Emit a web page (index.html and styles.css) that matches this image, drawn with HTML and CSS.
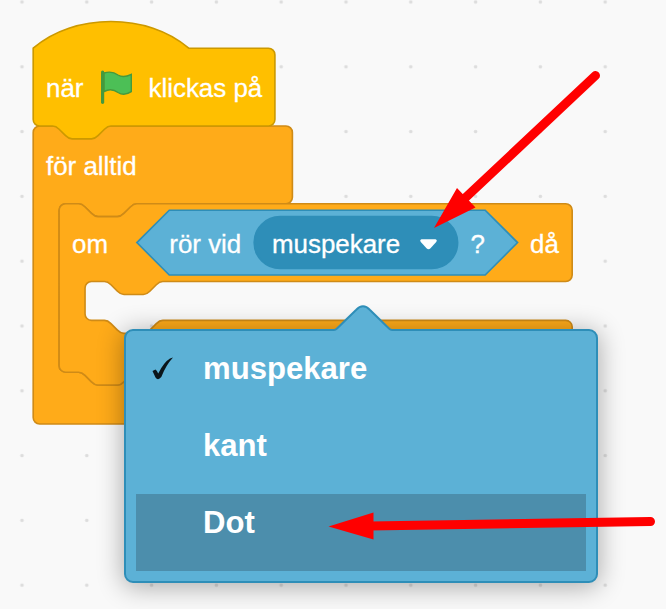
FILE: index.html
```html
<!DOCTYPE html>
<html lang="sv">
<head>
<meta charset="utf-8">
<title>Block</title>
<link rel="stylesheet" href="styles.css">
</head>
<body>
<main class="workspace">
  <svg class="blocks" width="666" height="609" viewBox="0 0 666 609">
    <defs>
      <pattern id="grid" x="-10.4" y="-30.4" width="64.8" height="64.8" patternUnits="userSpaceOnUse">
        <circle cx="32.4" cy="32.4" r="1.8" class="dot"/>
      </pattern>
    </defs>
    <rect width="666" height="609" fill="url(#grid)"/>
    <g transform="translate(33.2 48.2) scale(1.62)">
      <path class="control" d="M0,52 a4,4 0 0,1 4,-4 H156 a4,4 0 0,1 4,4 V92 a4,4 0 0,1 -4,4 H64 c-2,0 -3,1 -4,2 l-4,4 c-1,1 -2,2 -4,2 h-12 c-2,0 -3,-1 -4,-2 l-4,-4 c-1,-1 -2,-2 -4,-2 h-8 a4,4 0 0,0 -4,4 V196 a4,4 0 0,0 4,4 h8 c2,0 3,1 4,2 l4,4 c1,1 2,2 4,2 h12 c2,0 3,-1 4,-2 l4,-4 c1,-1 2,-2 4,-2 H156 a4,4 0 0,1 4,4 V228 a4,4 0 0,1 -4,4 H4 a4,4 0 0,1 -4,-4 Z"/>
      <path class="event" d="M0,0 c25,-22 71,-22 96,0 H145.200 a4,4 0 0,1 4,4 V44 a4,4 0 0,1 -4,4 H48 c-2,0 -3,1 -4,2 l-4,4 c-1,1 -2,2 -4,2 h-12 c-2,0 -3,-1 -4,-2 l-4,-4 c-1,-1 -2,-2 -4,-2 H4 a4,4 0 0,1 -4,-4 Z"/>
      <path class="control" d="M16,100 a4,4 0 0,1 4,-4 h8 c2,0 3,1 4,2 l4,4 c1,1 2,2 4,2 h12 c2,0 3,-1 4,-2 l4,-4 c1,-1 2,-2 4,-2 H328.700 a4,4 0 0,1 4,4 V140 a4,4 0 0,1 -4,4 H80 c-2,0 -3,1 -4,2 l-4,4 c-1,1 -2,2 -4,2 h-12 c-2,0 -3,-1 -4,-2 l-4,-4 c-1,-1 -2,-2 -4,-2 h-8 a4,4 0 0,0 -4,4 V164 a4,4 0 0,0 4,4 h8 c2,0 3,1 4,2 l4,4 c1,1 2,2 4,2 h12 c2,0 3,-1 4,-2 l4,-4 c1,-1 2,-2 4,-2 H328.700 a4,4 0 0,1 4,4 V196 a4,4 0 0,1 -4,4 H64 c-2,0 -3,1 -4,2 l-4,4 c-1,1 -2,2 -4,2 h-12 c-2,0 -3,-1 -4,-2 l-4,-4 c-1,-1 -2,-2 -4,-2 h-8 a4,4 0 0,1 -4,-4 Z"/>
      <path class="sensing" d="M84,100 H279 l20,20 l-20,20 H84 l-20,-20 Z"/>
      <rect class="field" x="136.4" y="104" width="125.600" height="32" rx="16"/>
    </g>
    <path class="caret" d="M421.500 239.300 H435.500 Q437.600 240 436.200 242 L430.500 248.300 Q428.500 250.300 426.500 248.300 L420.800 242 Q419.400 240 421.500 239.300Z"/>
    <path class="flag" d="M104 73 C109 71.500 114 72 118 75 C122 77.500 127 76.500 131.300 74.300 V91.700 C127 94.500 122 95 118 92.500 C114 89.500 109 89 104 91.500Z"/>
    <path class="pole" d="M102.600 72.200 V102.300"/>
    <g class="label">
      <text x="46" y="97">när</text>
      <text x="148.500" y="97">klickas på</text>
      <text x="46" y="174.700">för alltid</text>
      <text x="72" y="252.700">om</text>
      <text x="169.300" y="252.700">rör vid</text>
      <text x="272" y="252.700">muspekare</text>
      <text x="470.500" y="252.700">?</text>
      <text x="530" y="252.700">då</text>
    </g>
  </svg>

  <div class="menu">
    <svg class="tip" width="58" height="28" viewBox="0 0 58 28">
      <path d="M0 28 V25 C2 25 2.500 24.500 4 23 L22 5 Q29 -2 36 5 L54 23 C55.500 24.500 56 25 58 25 V28Z" class="tip-fill"/>
      <path d="M0 25 Q1.500 25 3 23.500 L22 5 Q29 -2.500 36 5 L55 23.500 Q56.500 25 58 25" class="tip-line"/>
    </svg>
    <div class="item">
      <svg class="check" width="24" height="26" viewBox="0 0 24 26"><path d="M1.500 15 L4.500 13.500 Q6 14.500 7.200 17.500 Q13 6 19 2.500 L22 1.500 Q15 9 10.300 21 Q7 25 4.500 21.500 Z"/></svg>
      <span>muspekare</span>
    </div>
    <div class="item"><span>kant</span></div>
    <div class="item active"><span>Dot</span></div>
  </div>

  <svg class="arrows" width="666" height="609" viewBox="0 0 666 609">
    <path class="shaft" d="M595.500 75.500 L463 200 M650.500 521.500 L370 526"/>
    <path class="head" d="M434 228 L457 188 L475.500 207.500Z M328.500 526.500 L373.500 512.500 V539.500Z"/>
  </svg>
</main>
</body>
</html>
```

FILE: styles.css
```css
body {
  margin: 0;
  font-family: "Liberation Sans", Arial, sans-serif;
}

.workspace {
  position: relative;
  width: 666px;
  height: 609px;
  overflow: hidden;
  background: #f9f9f9;
}

.blocks {
  display: block;
}

.dot { fill: #dddddd; }
.control { fill: #ffab19; stroke: #cf8b17; }
.event { fill: #ffbf00; stroke: #cc9900; }
.sensing { fill: #5cb1d6; stroke: #2e8eb8; }
.field { fill: #2e8eb8; stroke: #2e8eb8; }
.caret { fill: #ffffff; }
.flag { fill: #4cbf56; stroke: #45993d; stroke-width: 1.4; }
.pole { stroke: #45993d; stroke-width: 3.2; stroke-linecap: round; }

.label {
  fill: #ffffff;
  stroke: #ffffff;
  stroke-width: 0.3;
  font-size: 25.92px;
}

.menu {
  position: absolute;
  left: 124px;
  top: 329px;
  box-sizing: border-box;
  width: 474px;
  height: 254px;
  padding: 9px 10px 10px;
  border: 2px solid #2e8eb8;
  border-radius: 9px;
  background: #5cb1d6;
  box-shadow: 0 3px 26px 1px rgba(0, 0, 0, 0.32);
}

.tip {
  position: absolute;
  left: 208px;
  top: -26px;
}

.tip-fill { fill: #5cb1d6; }
.tip-line { fill: none; stroke: #2e8eb8; stroke-width: 2; }

.item {
  position: relative;
  box-sizing: border-box;
  height: 77px;
  padding: 12px 0 0 67px;
  color: #ffffff;
  font-size: 31.1px;
  font-weight: bold;
  line-height: 34px;
}

.active { background: #4c8eac; }

.check {
  position: absolute;
  left: 15px;
  top: 16px;
  fill: #0b151a;
}

.arrows {
  position: absolute;
  left: 0;
  top: 0;
}

.shaft {
  fill: none;
  stroke: #ff0000;
  stroke-width: 9;
  stroke-linecap: round;
}

.head { fill: #ff0000; }
```
